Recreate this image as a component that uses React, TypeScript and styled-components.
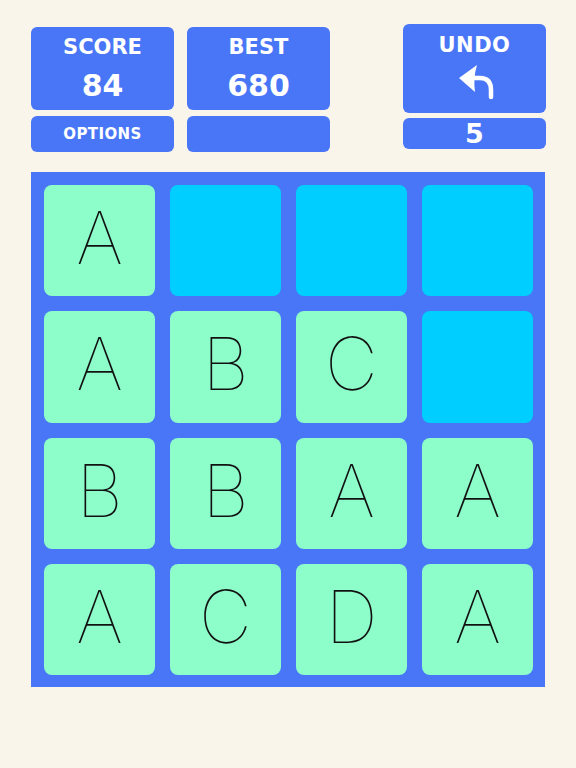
import React from "react";
import styled, { createGlobalStyle } from "styled-components";

const Global = createGlobalStyle`
  html, body { margin: 0; padding: 0; background: #faf5eb; }
  body { width: 576px; height: 768px; overflow: hidden; }
`;

const Page = styled.div`
  width: 576px;
  height: 768px;
  box-sizing: border-box;
  padding: 24px 0 0 31px;
  font-family: "DejaVu Sans", Verdana, sans-serif;
`;

const Header = styled.div`
  width: 515px;
  height: 148px;
  display: flex;
  justify-content: space-between;
  align-items: flex-start;
`;

const LeftGroup = styled.div`
  display: flex;
  gap: 13px;
  padding-top: 3px;
`;

const Column = styled.div<{ $gap: number }>`
  width: 143px;
  display: flex;
  flex-direction: column;
  gap: ${(p) => p.$gap}px;
`;

const Panel = styled.div<{ $h: number }>`
  height: ${(p) => p.$h}px;
  background: #4876f6;
  border-radius: 6px;
  color: #fff;
  font-weight: bold;
  display: flex;
  flex-direction: column;
  align-items: center;
  justify-content: center;
`;

const Label = styled.div<{ $size: number; $ls?: number }>`
  font-size: ${(p) => p.$size}px;
  line-height: 1;
  letter-spacing: ${(p) => p.$ls ?? 0}px;
`;

const Value = styled.div<{ $size: number }>`
  font-size: ${(p) => p.$size}px;
  line-height: 1;
  margin-top: 13px;
`;

const ArrowIcon = styled.svg`
  width: 42px;
  height: 40px;
  margin-top: 6px;
  display: block;
`;

const Board = styled.div`
  width: 514px;
  height: 515px;
  box-sizing: border-box;
  background: #4876f6;
  padding: 13px 12px 12px 13px;
  display: grid;
  grid-template-columns: repeat(4, 1fr);
  grid-template-rows: repeat(4, 1fr);
  gap: 15px;
`;

const Tile = styled.div<{ $empty: boolean }>`
  border-radius: 8px;
  background: ${(p) => (p.$empty ? "#00cefe" : "#8dfdca")};
  display: flex;
  align-items: center;
  justify-content: center;
  font-family: Inter, "Liberation Sans", sans-serif;
  font-weight: 100;
  font-size: 73px;
  color: #111;
  line-height: 1;
  padding-bottom: 6px;
  box-sizing: border-box;
`;

const tiles = [
  "A", "", "", "",
  "A", "B", "C", "",
  "B", "B", "A", "A",
  "A", "C", "D", "A",
];

export default function App() {
  return (
    <>
      <Global />
      <Page>
        <Header>
          <LeftGroup>
            <Column $gap={6}>
              <Panel $h={83}>
                <Label $size={21}>SCORE</Label>
                <Value $size={30}>84</Value>
              </Panel>
              <Panel $h={36}>
                <Label $size={15} $ls={0.4}>OPTIONS</Label>
              </Panel>
            </Column>
            <Column $gap={6}>
              <Panel $h={83}>
                <Label $size={21}>BEST</Label>
                <Value $size={30}>680</Value>
              </Panel>
              <Panel $h={36} />
            </Column>
          </LeftGroup>
          <Column $gap={5}>
            <Panel $h={89}>
              <Label $size={21} $ls={0.5}>UNDO</Label>
              <ArrowIcon viewBox="0 0 42 40">
                <path d="M5 16 L23 3 Q19 16 21 30 Z" fill="#fff" />
                <path
                  d="M17 16 H26 Q37 16 37 28 V35"
                  fill="none"
                  stroke="#fff"
                  strokeWidth={4.5}
                  strokeLinecap="round"
                />
              </ArrowIcon>
            </Panel>
            <Panel $h={31}>
              <Label $size={27}>5</Label>
            </Panel>
          </Column>
        </Header>
        <Board>
          {tiles.map((t, i) => (
            <Tile key={i} $empty={t === ""}>
              {t}
            </Tile>
          ))}
        </Board>
      </Page>
    </>
  );
}
